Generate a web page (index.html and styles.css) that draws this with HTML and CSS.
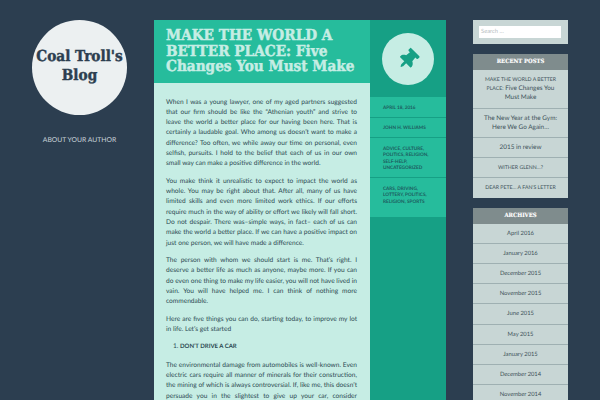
FILE: index.html
```html
<!DOCTYPE html>
<html lang="en">
<head>
<meta charset="utf-8">
<title>Coal Troll's Blog</title>
<link rel="stylesheet" href="styles.css">
</head>
<body>
<div class="page">
  <aside class="left">
    <div class="logo"><h1>Coal Troll's Blog</h1></div>
    <a class="about">ABOUT YOUR AUTHOR</a>
  </aside>
  <main class="article">
    <div class="col-main">
      <header class="head"><h2>MAKE THE WORLD A BETTER PLACE: Five Changes You Must Make</h2></header>
      <div class="body">
        <p>When I was a young lawyer, one of my aged partners suggested that our firm should be like the “Athenian youth” and strive to leave the world a better place for our having been here. That is certainly a laudable goal. Who among us doesn’t want to make a difference? Too often, we while away our time on personal, even selfish, pursuits. I hold to the belief that each of us in our own small way can make a positive difference in the world.</p>
        <p>You make think it unrealistic to expect to impact the world as whole. You may be right about that. After all, many of us have limited skills and even more limited work ethics. If our efforts require much in the way of ability or effort we likely will fall short. Do not despair. There was–simple ways, in fact– each of us can make the world a better place. If we can have a positive impact on just one person, we will have made a difference.</p>
        <p>The person with whom we should start is me. That’s right. I deserve a better life as much as anyone, maybe more. If you can do even one thing to make my life easier, you will not have lived in vain. You will have helped me. I can think of nothing more commendable.</p>
        <p>Here are five things you can do, starting today, to improve my lot in life. Let’s get started</p>
        <ol><li><strong>DON’T DRIVE A CAR</strong></li></ol>
        <p class="cut">The environmental damage from automobiles is well-known. Even electric cars require all manner of minerals for their construction, the mining of which is always controversial. If, like me, this doesn’t persuade you in the slightest to give up your car, consider</p>
      </div>
    </div>
    <div class="col-side">
      <div class="pin-box">
        <div class="pin">
          <svg viewBox="0 0 384 512" width="16" height="21"><path fill="#16a085" d="M298.028 214.267L285.793 96H328c13.255 0 24-10.745 24-24V24c0-13.255-10.745-24-24-24H56C42.745 0 32 10.745 32 24v48c0 13.255 10.745 24 24 24h42.207L85.972 214.267C37.465 236.82 0 277.261 0 328c0 13.255 10.745 24 24 24h136v104.007c0 1.242.289 2.467.845 3.578l24 48c2.941 5.882 11.364 5.893 14.311 0l24-48a8.008 8.008 0 0 0 .845-3.578V352h136c13.255 0 24-10.745 24-24-.001-51.183-37.983-91.42-85.973-113.733z"/></svg>
        </div>
      </div>
      <ul class="meta">
        <li>APRIL 18, 2016</li>
        <li>JOHN H. WILLIAMS</li>
        <li>ADVICE, CULTURE, POLITICS, RELIGION, SELF-HELP, UNCATEGORIZED</li>
        <li>CARS, DRIVING, LOTTERY, POLITICS, RELIGION, SPORTS</li>
      </ul>
    </div>
  </main>
  <aside class="right">
    <div class="search"><div class="search-input">Search …</div></div>
    <section class="widget">
      <h3>RECENT POSTS</h3>
      <ul>
        <li><span class="caps">MAKE THE WORLD A BETTER PLACE:</span> Five Changes You Must Make</li>
        <li>The New Year at the Gym: Here We Go Again…</li>
        <li>2015 in review</li>
        <li><span class="caps">WITHER GLENN…?</span></li>
        <li><span class="caps">DEAR PETE… A FAN’S LETTER</span></li>
      </ul>
    </section>
    <section class="widget dates">
      <h3>ARCHIVES</h3>
      <ul>
        <li>April 2016</li>
        <li>January 2016</li>
        <li>December 2015</li>
        <li>November 2015</li>
        <li>June 2015</li>
        <li>May 2015</li>
        <li>January 2015</li>
        <li>December 2014</li>
        <li>November 2014</li>
      </ul>
    </section>
  </aside>
</div>
</body>
</html>
```
FILE: styles.css
```css
* { box-sizing: border-box; }
html, body { margin: 0; height: 400px; overflow: hidden; }
body { background: #2c3e50; font-family: "Lato", "Liberation Sans", sans-serif; color: #2c3e50; text-rendering: geometricPrecision; }
.page { display: flex; align-items: flex-start; padding-top: 20px; height: 400px; overflow: hidden; }
.left { width: 154px; padding-left: 32px; padding-right: 27px; flex: none; display: flex; flex-direction: column; align-items: center; }
.logo { width: 95px; height: 95px; border-radius: 50%; background: #ecf0f1; display: flex; align-items: center; justify-content: center; }
.logo h1 { margin: 0; font: bold 15.2px/19px "DejaVu Serif Condensed", "DejaVu Serif", serif; -webkit-text-stroke: 0.4px #2c3e50; text-align: center; color: #2c3e50; width: 95px; padding-bottom: 3px; }
.about { margin-top: 20px; font-size: 6.8px; line-height: 10px; color: #c9d3da; white-space: nowrap; }
.article { display: flex; width: 292px; height: 380px; flex: none; overflow: hidden; }
.col-main { width: 216px; flex: none; }
.head { background: #26bc9c; height: 63px; padding: 8px 8px 0 12px; }
.head h2 { margin: 0; font: bold 15.2px/15.67px "DejaVu Serif Condensed", "DejaVu Serif", serif; -webkit-text-stroke: 0.45px #c6ede4; color: #c6ede4; }
.body { background: #c6ede4; height: 317px; padding: 13.5px 13px 0 12px; font-size: 6.6px; line-height: 10.33px; color: #2c4a52; text-align: justify; overflow: hidden; }
.body p { margin: 0 0 7px; }
.body p.cut { text-align-last: justify; }
.body ol { margin: 0 0 7px; padding-left: 14px; }
.body strong { font-size: 6px; }
.col-side { flex: 1; background: #16a085; }
.pin-box { height: 77px; padding-top: 13px; display: flex; justify-content: center; align-items: flex-start; }
.pin { width: 52px; height: 52px; border-radius: 50%; background: #c6ede4; display: flex; align-items: center; justify-content: center; }
.pin svg { transform: rotate(45deg); }
.meta { list-style: none; margin: 0; padding: 0; background: #26bc9c; }
.meta li { padding: 6.5px 13px; border-bottom: 1px solid #16a085; font-size: 4.7px; line-height: 6.5px; font-weight: 700; color: #1d5c60; }
.meta li:last-child { border-bottom: 0; padding-bottom: 13px; }
.right { width: 95px; margin-left: 27px; flex: none; }
.search { background: #c8d6d5; height: 24px; padding: 6px; margin-bottom: 10px; }
.search-input { background: #fff; height: 12px; width: 82px; font-size: 5.8px; line-height: 12px; padding-left: 2px; color: #b5bcc0; }
.widget { background: #c8d6d5; margin-bottom: 10px; }
.widget h3 { margin: 0; background: #7f8c8d; height: 16px; font: bold 5.9px/16px "DejaVu Serif Condensed", "DejaVu Serif", serif; -webkit-text-stroke: 0.15px #fff; text-align: center; color: #fff; }
.widget ul { list-style: none; margin: 0; padding: 0; }
.widget li { padding: 5px 8px; border-bottom: 1px solid #9fb0b2; font-size: 6.4px; line-height: 9.2px; text-align: center; color: #3e525a; }
.widget li:last-child { border-bottom: 0; }
.widget .caps { font-size: 5.2px; line-height: 1; }
.dates li { font-size: 5.8px; }
```
